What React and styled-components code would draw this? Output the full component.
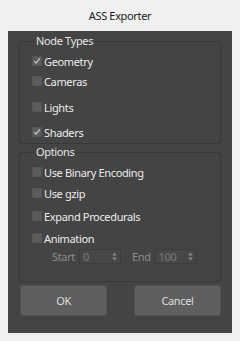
import styled, { createGlobalStyle } from 'styled-components'

const GlobalStyle = createGlobalStyle`
  body {
    margin: 0;
    background: #f0f0f0;
    font-family: 'Noto Sans', 'Open Sans', sans-serif;
    letter-spacing: -0.35px;
  }
`

export default function App() {
  const nodeTypes = [
    { id: 1, label: 'Geometry', checked: true, space: 0 },
    { id: 2, label: 'Cameras', checked: false, space: 0 },
    { id: 3, label: 'Lights', checked: false, space: 6 },
    { id: 4, label: 'Shaders', checked: true, space: 5 },
  ]

  const options = [
    { id: 1, label: 'Use Binary Encoding', space: 0 },
    { id: 2, label: 'Use gzip', space: 1 },
    { id: 3, label: 'Expand Procedurals', space: 3 },
    { id: 4, label: 'Animation', space: 2 },
  ]

  return (
    <Window>
      <GlobalStyle />
      <Title>ASS Exporter</Title>
      <Panel>
        <Group>
          <Legend>Node Types</Legend>
          {nodeTypes.map((item) => (
            <Row key={item.id} $space={item.space}>
              <Box>{item.checked && <Check />}</Box>
              <Label>{item.label}</Label>
            </Row>
          ))}
        </Group>
        <Group $options>
          <Legend>Options</Legend>
          {options.map((item) => (
            <Row key={item.id} $space={item.space}>
              <Box />
              <Label>{item.label}</Label>
            </Row>
          ))}
          <RangeRow>
            <Dim>Start</Dim>
            <Spinner value="0" />
            <Dim $end>End</Dim>
            <Spinner value="100" />
          </RangeRow>
        </Group>
        <Buttons>
          <Button>OK</Button>
          <Button>Cancel</Button>
        </Buttons>
      </Panel>
    </Window>
  )
}

function Check() {
  return (
    <svg width="10" height="10" viewBox="0 0 10 10">
      <path d="M1.5 5.2 L3.8 7.6 L8.6 1.8" fill="none" stroke="#c9c9c9" strokeWidth="1.6" />
    </svg>
  )
}

function Spinner({ value }) {
  return (
    <SpinBox>
      <SpinValue>{value}</SpinValue>
      <Arrows>
        <svg width="5" height="9" viewBox="0 0 5 9">
          <path d="M2.5 0.5 L4.8 3.5 L0.2 3.5 Z M2.5 8.5 L4.8 5.5 L0.2 5.5 Z" fill="#8a8a8a" />
        </svg>
      </Arrows>
    </SpinBox>
  )
}

const Window = styled.div`
  width: 240px;
  height: 341px;
  background: #f0f0f0;
  display: flex;
  flex-direction: column;
`

const Title = styled.div`
  height: 31px;
  display: flex;
  align-items: center;
  justify-content: center;
  font-size: 11px;
  color: #1b1b1b;
`

const Panel = styled.div`
  margin: 0 8px;
  height: 302px;
  box-sizing: border-box;
  background: #444444;
  padding: 3px 11px 0;
  display: flex;
  flex-direction: column;
`

const Group = styled.fieldset`
  margin: ${(p) => (p.$options ? '1px' : '0')} 0 0;
  padding: ${(p) => (p.$options ? '3px 0 17px 12px' : '3px 0 1px 12px')};
  border: 1px solid #393939;
  border-radius: 2px;
  min-width: 0;
`

const Legend = styled.legend`
  padding: 0 2px;
  margin-left: 2px;
  font-size: 11px;
  line-height: 14px;
  color: #e4e4e4;
`

const Row = styled.div`
  height: 20px;
  margin-top: ${(p) => p.$space}px;
  display: flex;
  align-items: center;
`

const Box = styled.span`
  width: 10px;
  height: 10px;
  box-sizing: border-box;
  background: #5c5c5c;
  border: 1px solid #555;
  display: flex;
  align-items: center;
  justify-content: center;
`

const Label = styled.span`
  margin-left: 2px;
  font-size: 11px;
  color: #ececec;
`

const RangeRow = styled.div`
  margin-top: 1px;
  height: 15px;
  display: flex;
  align-items: center;
  padding-left: 20px;
`

const Dim = styled.span`
  font-size: 11px;
  color: #8c8c8c;
  margin-left: ${(p) => (p.$end ? '11px' : '0')};
  margin-right: 4px;
`

const SpinBox = styled.div`
  width: 42px;
  height: 15px;
  box-sizing: border-box;
  border: 1px solid #3c3c3c;
  background: #474747;
  display: flex;
  align-items: center;
  justify-content: space-between;
  padding: 0 3px 0 3px;
`

const SpinValue = styled.span`
  font-size: 11px;
  color: #7c7c7c;
`

const Arrows = styled.span`
  display: flex;
`

const Buttons = styled.div`
  margin-top: 3px;
  padding: 0 0 0 1px;
  display: flex;
  justify-content: space-between;
`

const Button = styled.button`
  width: 87px;
  height: 31px;
  border: 1px solid #525252;
  border-radius: 3px;
  background: #5f5f5f;
  color: #dedede;
  font-family: inherit;
  font-size: 11px;
  letter-spacing: inherit;
  padding: 0;
`
